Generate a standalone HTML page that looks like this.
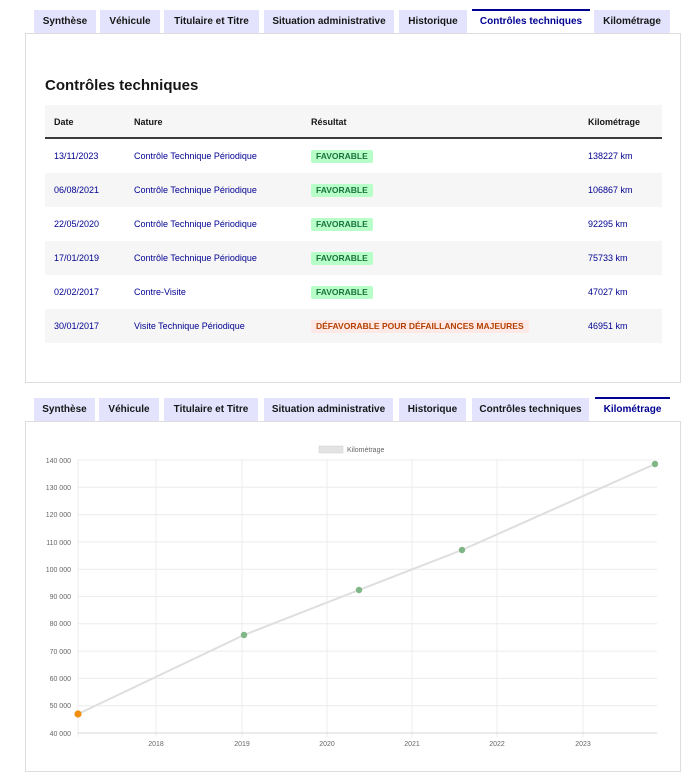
<!DOCTYPE html>
<html><head><meta charset="utf-8"><style>
*{box-sizing:border-box;margin:0;padding:0}
body{width:688px;height:784px;background:#fff;font-family:"Liberation Sans",sans-serif;position:relative;overflow:hidden}
.tab{position:absolute;height:23px;background:#e3e3fd;color:#161616;font-weight:bold;font-size:10px;line-height:23px;text-align:center;white-space:nowrap}
.tab.act{background:#fff;color:#000091;border-top:2px solid #000091;height:24px;line-height:21px}
.panel{position:absolute;left:25px;width:656px;border:1px solid #ddd;background:#fff}
h2{position:absolute;left:45px;top:77px;font-size:15px;font-weight:bold;color:#161616}
.tbl{position:absolute;left:45px;top:105px;width:617px}
.row{height:34px;position:relative;font-size:9px;color:#000091}
.row span{position:absolute;top:0;line-height:34px}
.hd{background:#f6f6f6;border-bottom:2px solid #3a3a3a;color:#161616;font-weight:bold}
.g{background:#f6f6f6}
.b{display:inline-block;line-height:13px;padding:0 5px;font-weight:bold;font-size:8.5px;border-radius:2px;font-style:normal}
.ok{background:#b8fec9;color:#18753c}
.ko{background:#ffe9e6;color:#b34000}
</style></head><body>
<div class="tab" style="left:34px;top:10px;width:62px">Synthèse</div>
<div class="tab" style="left:100px;top:10px;width:60px">Véhicule</div>
<div class="tab" style="left:164px;top:10px;width:95px">Titulaire et Titre</div>
<div class="tab" style="left:264px;top:10px;width:130px">Situation administrative</div>
<div class="tab" style="left:399px;top:10px;width:68px">Historique</div>
<div class="tab act" style="left:472px;top:9px;width:118px">Contrôles techniques</div>
<div class="tab" style="left:594px;top:10px;width:76px">Kilométrage</div>
<div class="panel" style="top:33px;height:350px"></div>
<h2>Contrôles techniques</h2>
<div class="tbl">
<div class="row hd"><span style="left:9px">Date</span><span style="left:89px">Nature</span><span style="left:266px">Résultat</span><span style="left:543px">Kilométrage</span></div>
<div class="row"><span style="left:9px">13/11/2023</span><span style="left:89px">Contrôle Technique Périodique</span><span style="left:266px"><i class="b ok">FAVORABLE</i></span><span style="left:543px">138227 km</span></div>
<div class="row g"><span style="left:9px">06/08/2021</span><span style="left:89px">Contrôle Technique Périodique</span><span style="left:266px"><i class="b ok">FAVORABLE</i></span><span style="left:543px">106867 km</span></div>
<div class="row"><span style="left:9px">22/05/2020</span><span style="left:89px">Contrôle Technique Périodique</span><span style="left:266px"><i class="b ok">FAVORABLE</i></span><span style="left:543px">92295 km</span></div>
<div class="row g"><span style="left:9px">17/01/2019</span><span style="left:89px">Contrôle Technique Périodique</span><span style="left:266px"><i class="b ok">FAVORABLE</i></span><span style="left:543px">75733 km</span></div>
<div class="row"><span style="left:9px">02/02/2017</span><span style="left:89px">Contre-Visite</span><span style="left:266px"><i class="b ok">FAVORABLE</i></span><span style="left:543px">47027 km</span></div>
<div class="row g"><span style="left:9px">30/01/2017</span><span style="left:89px">Visite Technique Périodique</span><span style="left:266px"><i class="b ko">DÉFAVORABLE POUR DÉFAILLANCES MAJEURES</i></span><span style="left:543px">46951 km</span></div>
</div>

<div class="tab" style="left:34px;top:398px;width:61px">Synthèse</div>
<div class="tab" style="left:99px;top:398px;width:60px">Véhicule</div>
<div class="tab" style="left:164px;top:398px;width:94px">Titulaire et Titre</div>
<div class="tab" style="left:264px;top:398px;width:129px">Situation administrative</div>
<div class="tab" style="left:399px;top:398px;width:67px">Historique</div>
<div class="tab" style="left:472px;top:398px;width:117px">Contrôles techniques</div>
<div class="tab act" style="left:595px;top:397px;width:75px">Kilométrage</div>
<div class="panel" style="top:421px;height:351px"></div>
<svg style="position:absolute;left:0;top:0" width="688" height="784" font-family="Liberation Sans, sans-serif" font-size="7" fill="#666">
<g stroke="#ececec" stroke-width="1">
<line x1="78" y1="460" x2="657" y2="460"/><line x1="78" y1="487.3" x2="657" y2="487.3"/><line x1="78" y1="514.6" x2="657" y2="514.6"/><line x1="78" y1="541.9" x2="657" y2="541.9"/><line x1="78" y1="569.2" x2="657" y2="569.2"/><line x1="78" y1="596.5" x2="657" y2="596.5"/><line x1="78" y1="623.8" x2="657" y2="623.8"/><line x1="78" y1="651.1" x2="657" y2="651.1"/><line x1="78" y1="678.4" x2="657" y2="678.4"/><line x1="78" y1="705.7" x2="657" y2="705.7"/>
<line x1="78" y1="460" x2="78" y2="737"/><line x1="156" y1="460" x2="156" y2="737"/><line x1="242" y1="460" x2="242" y2="737"/><line x1="327" y1="460" x2="327" y2="737"/><line x1="412" y1="460" x2="412" y2="737"/><line x1="497" y1="460" x2="497" y2="737"/><line x1="583" y1="460" x2="583" y2="737"/>
</g>
<line x1="78" y1="733" x2="657" y2="733" stroke="#d8d8d8"/>
<g text-anchor="end"><text x="71" y="463">140 000</text><text x="71" y="490">130 000</text><text x="71" y="517">120 000</text><text x="71" y="545">110 000</text><text x="71" y="572">100 000</text><text x="71" y="599">90 000</text><text x="71" y="626">80 000</text><text x="71" y="654">70 000</text><text x="71" y="681">60 000</text><text x="71" y="708">50 000</text><text x="71" y="736">40 000</text></g>
<g text-anchor="middle"><text x="156" y="746">2018</text><text x="242" y="746">2019</text><text x="327" y="746">2020</text><text x="412" y="746">2021</text><text x="497" y="746">2022</text><text x="583" y="746">2023</text></g>
<rect x="319" y="446" width="24" height="7" fill="#e3e3e3" stroke="#d0d0d0" stroke-width=".5"/><text x="347" y="452">Kilométrage</text>
<polyline points="78,714 244,635 359,590 462,550 655,464" fill="none" stroke="#dedede" stroke-width="2"/>
<circle cx="244" cy="635" r="3.2" fill="#7fb685"/><circle cx="359" cy="590" r="3.2" fill="#7fb685"/><circle cx="462" cy="550" r="3.2" fill="#7fb685"/><circle cx="655" cy="464" r="3.2" fill="#7fb685"/>
<circle cx="78" cy="714" r="3.6" fill="#f0900a"/>
</svg>
</body></html>
